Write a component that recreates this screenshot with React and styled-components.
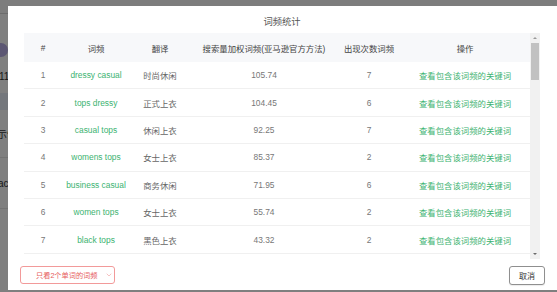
import styled, { createGlobalStyle } from "styled-components";
import { ChevronDown } from "lucide-react";

const GlobalStyle = createGlobalStyle`
    html, body {
        margin: 0;
        padding: 0;
        width: 557px;
        height: 292px;
        overflow: hidden;
        background: #ffffff;
        font-family: "Liberation Sans", "Noto Sans CJK SC", sans-serif;
    }
`;

const Page = styled.div`
    width: 557px;
    height: 292px;
    background: #ffffff;
    display: flex;
    flex-direction: column;
`;

const PageTop = styled.div`
    height: 13px;
    border-bottom: 1px solid #d8d8d8;
    background: #fafafa;
`;

const PageRow = styled.div`
    display: flex;
    align-items: center;
    height: ${(props) => props.$h}px;
    box-sizing: border-box;
    font-size: 10px;
    color: #333;
    background: ${(props) => props.$bg || "transparent"};
    border-bottom: ${(props) => (props.$line ? "1px solid #e6e6e6" : "none")};
`;

const PageText = styled.span`
    margin-left: ${(props) => props.$shift}px;
`;

const Avatar = styled.span`
    width: 14px;
    height: 14px;
    border-radius: 50%;
    background: #b9aee6;
    margin-left: -6px;
`;

const Mask = styled.div`
    position: fixed;
    inset: 0;
    background: rgba(0, 0, 0, 0.5);
`;

const Modal = styled.div`
    position: fixed;
    left: 8px;
    top: 6px;
    width: 552px;
    height: 284px;
    background: #ffffff;
    display: flex;
    flex-direction: column;
`;

const Title = styled.div`
    height: 27px;
    box-sizing: border-box;
    padding: 11px 20px 0 16px;
    line-height: 11px;
    text-align: center;
    font-size: 9.3px;
    color: #555;
`;

const Body = styled.div`
    height: 226px;
    padding: 0 20px 0 16px;
    display: flex;
`;

const TableWrap = styled.div`
    flex: 1;
    overflow: hidden;
`;

const Row = styled.div`
    display: grid;
    grid-template-columns: 38px 68px 60px 148px 62px 130px;
    align-items: center;
    height: ${(props) => (props.$head ? "29px" : "27.4px")};
    box-sizing: border-box;
    background: ${(props) => (props.$head ? "#f7f8fa" : "#ffffff")};
    border-bottom: ${(props) => (props.$head ? "none" : "1px solid #f0f0f0")};
    font-size: 8.4px;
    color: ${(props) => (props.$head ? "#444" : "#777")};
`;

const Cell = styled.div`
    text-align: center;
    white-space: nowrap;
    color: ${(props) => props.$color || "inherit"};
`;

const ScrollBar = styled.div`
    width: 10px;
    background: #f1f1f1;
    display: flex;
    flex-direction: column;
    align-items: center;
`;

const ArrowBox = styled.div`
    height: 10px;
    width: 10px;
    display: flex;
    align-items: center;
    justify-content: center;
`;

const Arrow = styled.span`
    width: 0;
    height: 0;
    border-left: 2.5px solid transparent;
    border-right: 2.5px solid transparent;
    ${(props) =>
        props.$down
            ? "border-top: 2.5px solid #6a6a6a;"
            : "border-bottom: 2.5px solid #9a9a9a;"}
`;

const Thumb = styled.div`
    width: 8px;
    height: 37px;
    background: #c1c1c1;
`;

const Spacer = styled.div`
    flex: 1;
`;

const Footer = styled.div`
    flex: 1;
    display: flex;
    justify-content: space-between;
    align-items: flex-start;
    padding: 7px 15px 0 12px;
`;

const FilterButton = styled.button`
    height: 18px;
    width: 95px;
    box-sizing: border-box;
    display: flex;
    align-items: center;
    gap: 7px;
    padding: 0 0 0 15px;
    border: 1px solid #f29a9a;
    border-radius: 3px;
    background: #ffffff;
    color: #e65c5c;
    font-family: inherit;
    font-size: 7.2px;
    svg {
        color: #f08c8c;
    }
`;

const CancelButton = styled.button`
    height: 19px;
    width: 36px;
    box-sizing: border-box;
    padding: 0;
    border: 1px solid #8f8f8f;
    border-radius: 3px;
    background: #ffffff;
    box-shadow: 0 1px 1px rgba(0, 0, 0, 0.08);
    color: #333;
    font-family: inherit;
    font-size: 8px;
`;

const GREEN = "#3cb371";

const words = [
    { word: "dressy casual", cn: "时尚休闲", score: "105.74", count: 7 },
    { word: "tops dressy", cn: "正式上衣", score: "104.45", count: 6 },
    { word: "casual tops", cn: "休闲上衣", score: "92.25", count: 7 },
    { word: "womens tops", cn: "女士上衣", score: "85.37", count: 2 },
    { word: "business casual", cn: "商务休闲", score: "71.95", count: 6 },
    { word: "women tops", cn: "女士上衣", score: "55.74", count: 2 },
    { word: "black tops", cn: "黑色上衣", score: "43.32", count: 2 },
];

function App() {
    return (
        <>
            <GlobalStyle />
            <Page>
                <PageTop />
                <PageRow $h={29} />
                <PageRow $h={14}>
                    <Avatar />
                </PageRow>
                <PageRow $h={12} />
                <PageRow $h={14}>
                    <PageText $shift={-1}>11</PageText>
                </PageRow>
                <PageRow $h={10} />
                <PageRow $h={17} $bg="#e9eef8" />
                <PageRow $h={48} $line>
                    <PageText $shift={-3}>示例</PageText>
                </PageRow>
                <PageRow $h={51} $line>
                    <PageText $shift={-2}>ack</PageText>
                </PageRow>
            </Page>
            <Mask />
            <Modal>
                <Title>词频统计</Title>
                <Body>
                    <TableWrap>
                        <Row $head>
                            <Cell>#</Cell>
                            <Cell>词频</Cell>
                            <Cell>翻译</Cell>
                            <Cell>搜索量加权词频(亚马逊官方方法)</Cell>
                            <Cell>出现次数词频</Cell>
                            <Cell>操作</Cell>
                        </Row>
                        {words.map((w, i) => (
                            <Row key={w.word}>
                                <Cell>{i + 1}</Cell>
                                <Cell $color={GREEN}>{w.word}</Cell>
                                <Cell $color="#666">{w.cn}</Cell>
                                <Cell>{w.score}</Cell>
                                <Cell>{w.count}</Cell>
                                <Cell $color={GREEN}>查看包含该词频的关键词</Cell>
                            </Row>
                        ))}
                    </TableWrap>
                    <ScrollBar>
                        <ArrowBox>
                            <Arrow />
                        </ArrowBox>
                        <Thumb />
                        <Spacer />
                        <ArrowBox>
                            <Arrow $down />
                        </ArrowBox>
                    </ScrollBar>
                </Body>
                <Footer>
                    <FilterButton>
                        只看2个单词的词频
                        <ChevronDown size={8} strokeWidth={1.6} />
                    </FilterButton>
                    <CancelButton>取消</CancelButton>
                </Footer>
            </Modal>
        </>
    );
}

export default App;
